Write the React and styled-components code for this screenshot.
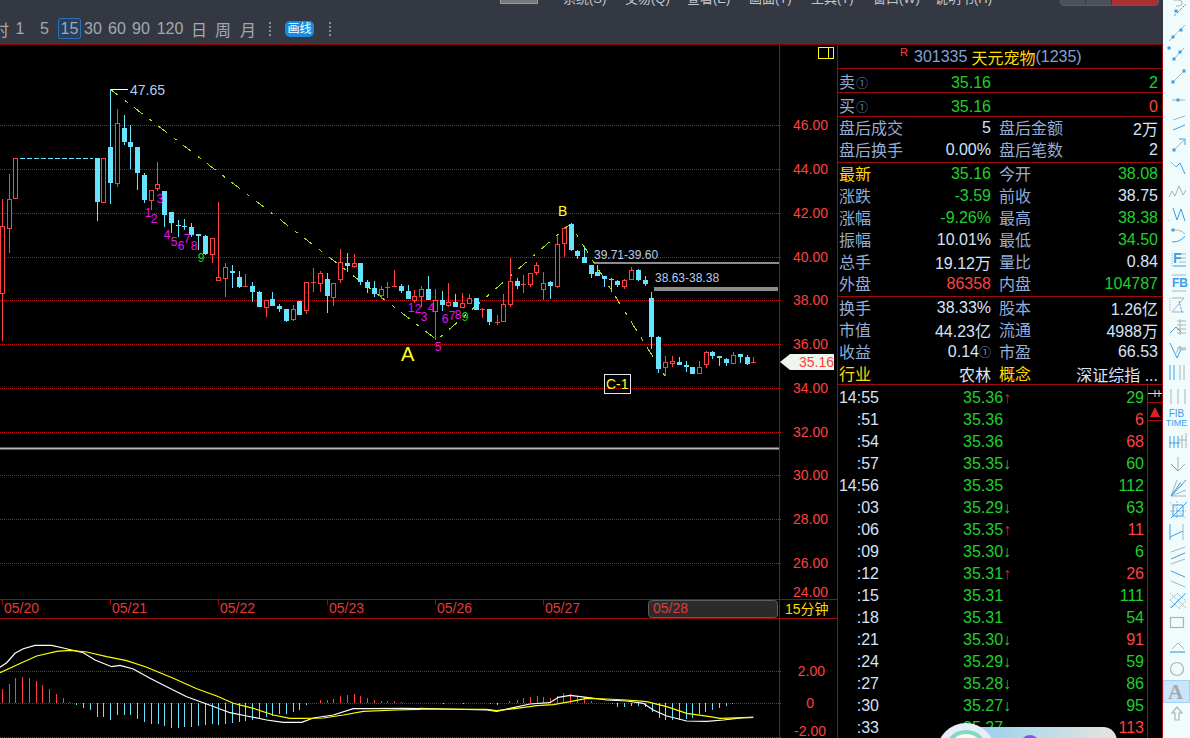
import React from 'react';
import styled, { createGlobalStyle } from 'styled-components';

const FONT = '"Liberation Sans", "Noto Sans CJK SC", sans-serif';
const RED = '#ff4040';
const CYAN = '#66e3ff';
const GREEN = '#1fd02b';
const LABEL = '#93acd8';
const VALUE = '#d5e3fb';
const YELLOW = '#ffdc00';
const LINE = '#9c0a0a';

const GlobalStyle = createGlobalStyle`
  html, body {
    margin: 0;
    width: 1190px;
    height: 738px;
    overflow: hidden;
    background: #000;
    font-family: ${FONT};
  }
`;

// x, high, body top, body bottom, low, kind
const candles = [
  [2, 199, 226, 293, 341, 'r'], [9, 174, 199, 228, 253, 'r'], [15, 158, 158, 198, 198, 'r'],
  [97, 158, 158, 202, 221, 'c'], [103, 158, 158, 202, 202, 'r'], [110, 89, 147, 183, 204, 'c'],
  [117, 109, 123, 183, 187, 'r'], [124, 115, 128, 142, 145, 'c'], [130, 125, 142, 147, 169, 'c'],
  [137, 147, 147, 173, 190, 'c'], [144, 173, 175, 200, 203, 'c'], [151, 190, 190, 200, 210, 'r'],
  [157, 162, 184, 188, 191, 'r'], [164, 191, 191, 215, 227, 'c'], [171, 212, 212, 223, 233, 'c'],
  [178, 220, 225, 226, 237, 'c'], [184, 219, 226, 227, 230, 'c'], [191, 223, 227, 235, 237, 'c'],
  [198, 234, 234, 236, 250, 'c'], [205, 235, 236, 254, 255, 'c'], [212, 238, 238, 254, 263, 'r'],
  [218, 202, 277, 280, 280, 'r'], [225, 263, 267, 278, 297, 'r'], [232, 265, 271, 273, 288, 'c'],
  [239, 271, 277, 287, 288, 'c'], [245, 274, 286, 287, 287, 'r'], [252, 282, 286, 292, 302, 'c'],
  [259, 291, 292, 307, 307, 'c'], [266, 300, 300, 307, 317, 'r'], [272, 292, 299, 306, 306, 'c'],
  [279, 304, 306, 309, 312, 'c'], [286, 309, 309, 321, 322, 'c'], [293, 305, 309, 319, 321, 'r'],
  [299, 301, 301, 315, 315, 'c'], [306, 282, 282, 310, 314, 'r'], [313, 268, 282, 283, 292, 'r'],
  [320, 271, 273, 283, 292, 'r'], [327, 273, 279, 296, 313, 'c'], [333, 283, 283, 297, 306, 'r'],
  [340, 249, 262, 279, 283, 'r'], [347, 253, 263, 266, 272, 'c'], [354, 254, 263, 266, 268, 'r'],
  [360, 263, 263, 282, 285, 'c'], [367, 280, 282, 288, 293, 'c'], [374, 281, 288, 294, 297, 'c'],
  [381, 286, 289, 295, 299, 'r'], [387, 282, 287, 288, 298, 'r'], [394, 270, 286, 287, 287, 'r'],
  [401, 284, 286, 291, 293, 'c'], [408, 285, 291, 299, 299, 'c'], [414, 290, 296, 300, 303, 'r'],
  [421, 286, 289, 296, 307, 'r'], [428, 276, 289, 300, 300, 'c'], [435, 289, 300, 311, 340, 'r'],
  [442, 291, 300, 305, 311, 'c'], [448, 283, 302, 305, 307, 'r'], [455, 294, 302, 307, 307, 'c'],
  [462, 293, 303, 307, 308, 'r'], [469, 294, 298, 303, 303, 'r'], [476, 298, 298, 310, 310, 'c'],
  [482, 308, 309, 310, 318, 'r'], [489, 309, 309, 322, 325, 'c'], [497, 315, 322, 323, 325, 'r'],
  [503, 294, 304, 321, 321, 'r'], [510, 258, 281, 304, 307, 'r'], [517, 278, 281, 286, 289, 'c'],
  [523, 275, 284, 285, 293, 'r'], [530, 273, 273, 284, 287, 'r'], [536, 262, 265, 272, 275, 'r'],
  [543, 272, 283, 289, 300, 'r'], [550, 281, 282, 286, 299, 'c'], [557, 235, 244, 286, 288, 'r'],
  [564, 227, 228, 243, 257, 'r'], [571, 223, 224, 250, 251, 'c'], [577, 250, 251, 256, 259, 'c'],
  [584, 247, 257, 263, 263, 'c'], [591, 265, 265, 274, 278, 'c'], [597, 265, 272, 276, 276, 'c'],
  [604, 276, 276, 279, 287, 'c'], [611, 278, 279, 280, 292, 'c'], [617, 280, 281, 285, 287, 'c'],
  [624, 279, 280, 286, 289, 'r'], [631, 267, 270, 279, 279, 'r'], [638, 269, 270, 280, 281, 'c'],
  [645, 276, 280, 284, 286, 'c'], [651, 292, 298, 337, 349, 'c'], [658, 336, 337, 369, 373, 'c'],
  [665, 356, 362, 367, 376, 'r'], [672, 356, 361, 363, 367, 'r'], [679, 357, 362, 365, 365, 'c'],
  [686, 361, 365, 367, 372, 'c'], [692, 367, 367, 374, 374, 'c'], [699, 361, 367, 373, 373, 'r'],
  [706, 351, 352, 364, 368, 'r'], [712, 351, 352, 356, 359, 'c'], [719, 356, 356, 358, 366, 'c'],
  [726, 358, 359, 363, 366, 'c'], [733, 352, 355, 363, 363, 'r'], [740, 354, 354, 357, 363, 'c'],
  [747, 355, 357, 364, 365, 'c'], [753, 357, 362, 363, 363, 'r'],
];

const priceGrid = [
  [46, 125], [44, 169], [42, 213], [40, 257], [38, 300], [36, 344],
  [34, 388], [32, 432], [30, 475], [28, 519], [26, 563],
];

const dates = [
  ['05/20', 2], ['05/21', 110], ['05/22', 218], ['05/23', 327],
  ['05/26', 435], ['05/27', 543], ['05/28', 651],
];

const tdMarks = [
  ['1', 148, 213], ['2', 154, 219], ['3', 160, 199], ['4', 167, 235], ['5', 174, 242],
  ['6', 181, 246], ['7', 187, 239], ['8', 194, 246], ['9', 201, 258, true],
  ['1', 411, 308], ['2', 418, 309], ['3', 424, 317], ['4', 431, 308], ['5', 438, 347],
  ['6', 445, 319], ['7', 452, 316], ['8', 458, 315], ['9', 465, 317, true],
];

// macd bars: zoom x, zoom y (3x crops)
const leftBars = [
  [7, 297], [28, 282], [46, 264], [67, 261], [88, 264], [109, 273], [127, 285], [148, 297], [169, 312], [190, 324], [208, 336],
  [229, 345], [250, 354], [271, 360], [292, 381], [310, 381], [331, 390], [352, 375], [373, 375], [391, 375], [412, 387],
  [433, 396], [454, 402], [475, 402], [493, 408], [514, 414], [535, 414], [553, 411], [574, 411], [595, 408], [616, 405],
  [637, 402], [655, 405], [676, 402], [697, 399], [718, 396], [736, 393], [757, 390], [778, 384], [799, 381], [817, 378],
  [838, 372], [859, 372], [880, 366], [898, 360], [919, 345], [961, 330], [982, 330], [1000, 327], [1021, 318], [1042, 315],
  [1063, 312], [1081, 318], [1102, 324], [1123, 330], [1144, 333], [1162, 333], [1183, 333], [1204, 336],
];
const rightBars = [
  [70, 343], [130, 343], [210, 343], [230, 345], [268, 334], [290, 330], [310, 325], [330, 322], [350, 318], [370, 322],
  [390, 325], [412, 318], [430, 310], [451, 312], [472, 318], [493, 322], [513, 332], [575, 343], [592, 351], [613, 351],
  [634, 348], [655, 348], [676, 351], [697, 366], [716, 384], [736, 390], [757, 390], [778, 390], [799, 387], [817, 384],
  [838, 372], [856, 366], [877, 360], [898, 354], [919, 348], [937, 342],
];
const difLeft = [[0,232],[20,218],[45,190],[70,176],[105,166],[155,166],[190,174],[215,180],[250,188],[285,210],[335,230],[360,226],[400,237],[450,265],[500,290],[560,320],[620,342],[690,368],[740,378],[800,390],[850,397],[905,397],[940,384],[1000,375],[1060,356],[1110,356],[1215,355],[1260,356]];
const difRight = [[0,355],[200,360],[230,364],[270,355],[330,342],[390,338],[415,322],[450,316],[500,322],[560,330],[620,333],[670,340],[700,360],[740,378],[800,393],[860,394],[910,390],[970,383],[1000,382]];
const deaLeft = [[0,248],[50,225],[110,198],[170,184],[210,181],[260,186],[320,200],[380,212],[440,232],[520,265],[590,296],[650,318],[700,340],[760,355],[820,375],[870,385],[910,385],[970,384],[1030,375],[1090,364],[1190,360],[1260,358]];
const deaRight = [[0,357],[200,358],[230,362],[290,355],[350,347],[400,344],[450,335],[500,325],[560,327],[620,330],[680,335],[740,350],[800,370],[870,380],[900,385],[1000,382]];

const toPage = (list, left) => list.map(([x, y]) => [left + x / 3, 590 + y / 3]);
const toPoints = (list) => list.map(([x, y]) => `${x.toFixed(1)},${y.toFixed(1)}`).join(' ');
const macdBars = [...toPage(leftBars, 0), ...toPage(rightBars, 420)];
const difLine = toPoints([...toPage(difLeft, 0), ...toPage(difRight, 420)]);
const deaLine = toPoints([...toPage(deaLeft, 0), ...toPage(deaRight, 420)]);

const Page = styled.div`
  position: relative;
  width: 1190px;
  height: 738px;
  overflow: hidden;
  display: flex;
  background: #000;
`;
const Main = styled.div`
  width: 1163px;
  display: flex;
  flex-direction: column;
`;
const TopBar = styled.div`
  height: 44px;
  flex: none;
  background: #343843;
  border-bottom: 1px solid #8b0000;
  overflow: hidden;
`;
const MenuRow = styled.div`
  height: 6px;
  padding-left: 500px;
  display: flex;
  align-items: flex-start;
  overflow: hidden;
`;
const Grip = styled.div`
  width: 38px;
  height: 4px;
  margin-right: 25px;
  background: #77787a;
  border: 1px solid #9a9a9a;
  border-top: none;
  box-sizing: border-box;
`;
const MenuItem = styled.div`
  width: 62px;
  margin-top: -9px;
  font-size: 13px;
  line-height: 16px;
  color: #c4c7cc;
  white-space: nowrap;
`;
const WinButtons = styled.div`
  margin-left: 63px;
  display: flex;
  gap: 1px;
  border: 1px solid #555a64;
  border-top: none;
  border-radius: 0 0 4px 4px;
`;
const WinButton = styled.div`
  width: ${(p) => p.$w}px;
  height: 5px;
  background: ${(p) => (p.$close ? '#a83232' : '#4c505a')};
`;
const PeriodRow = styled.div`
  height: 21px;
  margin-top: 12px;
  margin-left: -7px;
  display: flex;
  align-items: center;
`;
const Period = styled.div`
  width: ${(p) => p.$w}px;
  height: 21px;
  box-sizing: border-box;
  display: flex;
  align-items: center;
  justify-content: center;
  font-size: 16px;
  color: #a4a8b0;
  border: ${(p) => (p.$active ? '1px solid #2f6fb5' : 'none')};
  border-radius: 2px;
  background: ${(p) => (p.$active ? '#2a3f5c' : 'transparent')};
`;
const Dots = styled.div`
  width: 2px;
  height: 14px;
  margin: 0 ${(p) => p.$r}px 0 ${(p) => p.$l}px;
  background: repeating-linear-gradient(#8a8d94 0 2px, transparent 2px 4px);
`;
const DrawButton = styled.div`
  width: 29px;
  height: 16px;
  border-radius: 5px;
  background: #168bdc;
  color: #fff;
  font-size: 12px;
  line-height: 16px;
  text-align: center;
`;
const Content = styled.div`
  flex: 1;
  display: flex;
  min-height: 0;
`;
const ChartSvg = styled.svg`
  width: 837px;
  height: 693px;
  flex: none;
  display: block;
  font-family: ${FONT};
`;
const AxisText = styled.text`
  font-size: 14px;
  fill: ${RED};
`;
const DateText = styled.text`
  font-size: 14px;
  fill: #e03a3a;
`;
const InfoText = styled.text`
  font-size: ${(p) => p.$size || 12}px;
  fill: #b8cbec;
`;
const WaveText = styled.text`
  font-size: ${(p) => p.$size}px;
  fill: ${(p) => p.$fill || '#ffff20'};
`;
const TdText = styled.text`
  font-size: 12px;
  fill: ${(p) => (p.$green ? '#18d018' : '#e414f0')};
`;

const Panel = styled.div`
  width: 326px;
  flex: none;
  box-sizing: border-box;
  display: flex;
  flex-direction: column;
  border-left: 1px solid ${LINE};
  border-right: 1px solid ${LINE};
  font-size: 16px;
`;
const Title = styled.div`
  height: 24px;
  flex: none;
  box-sizing: border-box;
  padding-left: 62px;
  display: flex;
  align-items: center;
  border-bottom: 1px solid ${LINE};
  color: #7ea2dc;
`;
const Mark = styled.span`
  width: 14px;
  margin-top: -10px;
  font-size: 11px;
  color: ${RED};
`;
const StockName = styled.span`
  color: ${YELLOW};
  margin-left: 4px;
`;
const OrderRow = styled.div`
  height: 24px;
  flex: none;
  box-sizing: border-box;
  padding-left: 1px;
  display: grid;
  grid-template-columns: 94px 58px 167px;
  align-items: center;
  border-bottom: 1px solid ${LINE};
  color: ${LABEL};
`;
const OrderLabel = styled.span`
  padding-bottom: 3px;
  white-space: nowrap;
`;
const Level = styled.span`
  font-size: 12px;
  color: #5f85b5;
  margin-left: 1px;
`;
const Section = styled.div`
  height: ${(p) => p.$h}px;
  flex: none;
  box-sizing: border-box;
  padding-left: 1px;
  border-bottom: 1px solid ${LINE};
`;
const QuoteRow = styled.div`
  height: 22px;
  display: grid;
  grid-template-columns: 152px 159px;
  gap: 8px;
`;
const Quote = styled.div`
  display: flex;
  justify-content: space-between;
  align-items: center;
  margin-top: -2px;
  white-space: nowrap;
`;
const Label = styled.span`
  padding-bottom: 2px;
  color: ${(p) => (p.$hot ? YELLOW : LABEL)};
`;
const Value = styled.span`
  color: ${(p) => p.$c || VALUE};
  text-align: right;
`;
const Small = styled.span`
  font-size: 12px;
  color: #7b8ba5;
`;
const TradeWrap = styled.div`
  flex: 1;
  display: flex;
  min-height: 0;
  overflow: hidden;
`;
const TradeList = styled.div`
  width: 309px;
  flex: none;
  padding-top: 2px;
  border-right: 1px solid ${LINE};
`;
const TradeRow = styled.div`
  height: 22px;
  display: grid;
  grid-template-columns: 41px 84px 60px 124px;
  align-items: center;
`;
const TradeTime = styled.span`
  color: ${VALUE};
  text-align: right;
`;
const TradePrice = styled.span`
  grid-column: 3;
  color: ${GREEN};
  white-space: nowrap;
`;
const Tick = styled.span`
  color: ${(p) => (p.$up ? '#e02020' : GREEN)};
`;
const TradeVol = styled.span`
  grid-column: 4;
  color: ${(p) => (p.$up ? RED : GREEN)};
  text-align: right;
  padding-right: 3px;
`;
const SideCol = styled.div`
  flex: 1;
  display: flex;
  flex-direction: column;
`;
const SideBtn = styled.div`
  height: 17px;
  display: flex;
  align-items: center;
  justify-content: center;
  border-bottom: 1px solid ${LINE};
`;

const ToolStrip = styled.div`
  flex: 1;
  height: 738px;
  background: #f0fcfb;
  display: flex;
  flex-direction: column;
  overflow: hidden;
`;
const ToolCell = styled.div`
  height: 22.75px;
  flex: none;
  display: flex;
  align-items: center;
  justify-content: center;
  box-sizing: border-box;
  &:first-child { margin-top: -2.4px; }
  ${(p) => p.$active && 'background: #c9e5fb; border: 1px solid #9fd2fa;'}
`;
const ToolSvg = styled.svg`
  width: 27px;
  height: 22px;
  display: block;
  flex: none;
  font-family: ${FONT};
`;
const G = styled.g`
  stroke: #adb2b6;
  fill: none;
`;
const B = styled.g`
  stroke: #3c9ee8;
  fill: none;
`;
const Sq = styled.rect.attrs((p) => ({ x: p.$x - 1.5, y: p.$y - 1.5, width: 3, height: 3 }))`
  fill: #3c9ee8;
  stroke: none;
`;
const IconLetter = styled.text`
  font-size: ${(p) => p.$size}px;
  font-weight: ${(p) => (p.$thin ? 400 : 700)};
  fill: #3c9ee8;
  stroke: none;
`;
const SerifA = styled.text`
  font-family: "Liberation Serif", serif;
  font-size: 21px;
  font-weight: 700;
  fill: #a5a8aa;
`;

const Dock = styled.div`
  position: absolute;
  left: 937px;
  top: 723px;
  width: 180px;
  height: 30px;
`;
const DockPill = styled.div`
  position: absolute;
  left: 20px;
  top: 4px;
  width: 160px;
  height: 30px;
  border-radius: 14px 14px 0 0;
  background: linear-gradient(90deg, #8ecbea, #b9dcea 50%, #e4e4de);
`;
const DockBall = styled.div`
  position: absolute;
  left: 0;
  top: 0;
  width: 58px;
  height: 58px;
  box-sizing: border-box;
  border-radius: 50%;
  background: #e9ecfb;
  padding: 7px;
`;
const DockCore = styled.div`
  width: 44px;
  height: 44px;
  box-sizing: border-box;
  border-radius: 50%;
  border: 4px solid #7ddcbb;
  background: #f4fbf8;
`;
const DockRing = styled.div`
  position: absolute;
  left: 83px;
  top: 12px;
  width: 20px;
  height: 20px;
  box-sizing: border-box;
  border-radius: 50%;
  border: 3px solid #7a55f0;
`;

const poly = (pts) => pts.map((p) => p.join(',')).join(' ');

const toolIcons = [
  <><G><path d="M10 2h6a3 3 0 0 1 0 6h-3" /></G><B><path d="M11 18 23 6" strokeDasharray="3 1" /></B><Sq $x={13} $y={13} /></>,
  <><G><path d="M6 20 22 4" strokeDasharray="5 1" /></G><Sq $x={10} $y={16} /><Sq $x={18} $y={9} /></>,
  <><G><path d="M11 16 21 5" /></G><Sq $x={11} $y={16} /><Sq $x={17} $y={9} /><Sq $x={6} $y={5} /></>,
  <><G><path d="M10 16 21 5" /></G><Sq $x={10} $y={16} /><Sq $x={21} $y={5} /></>,
  <><G><path d="M9 11h13" /></G><Sq $x={15} $y={11} /></>,
  <><G><path d="M10 8l12-4" /></G><B><path d="M10 18l12-5" /></B></>,
  <><G><path d="M11 16 21 6" /></G><B><path d="M16 5h6v6" /></B><Sq $x={11} $y={16} /></>,
  <><G><path d="M8 5l5 5" /></G><B><path d="M13 10l4-4 5 11" /></B></>,
  <><G><path d="M6 17l3-6 3 5 4-10 4 9 3-5" /></G></>,
  <><G><path d="M6 17v1" /></G><B><path d="M10 5l4 12 4-11 4 12" /></B></>,
  <><Sq $x={10} $y={5} /><G><path d="M11 5c5 0 8 1 11 4" /></G><B><path d="M9 17c6 0 10-2 13-6" /></B></>,
  <><G><path d="M9 5v14" strokeDasharray="1 1" /><path d="M16 6h7M16 10h7M16 14h7" /></G><IconLetter $size={14} x="10" y="15">F</IconLetter><B><path d="M10 18h13" /></B></>,
  <><G><path d="M9 4h14M9 20h14" /></G><IconLetter $size={12} x="9" y="16">FB</IconLetter></>,
  <><G><path d="M7 4v14" strokeDasharray="1 1" /><path d="M9 4h12M9 18h12M21 4 9 18" /></G><B><path d="M16 7l3 11" strokeDasharray="2 1" /></B></>,
  <><G><path d="M14 5h9M14 9h9M14 13h9M14 17h9M17 3v16" /></G><B><path d="M7 17l6-6 5 5" /></B></>,
  <><G><path d="M13 14l4-7 2 4 4-1M14 9h9" /></G><B><path d="M7 4l7 15 4-9" /></B></>,
  <><B><path d="M7 3v15M11 3v15" /></B><G><path d="M17 3v15M21 3v15" /></G></>,
  <><G><path d="M8 4v15M15 4v15M22 4v15" /></G></>,
  <><IconLetter $size={10} $thin x="13.5" y="10" textAnchor="middle">FIB</IconLetter><IconLetter $size={9} $thin x="13.5" y="19" textAnchor="middle">TIME</IconLetter></>,
  <><B><path d="M7 6v12M11 6v12M15 6v12M6 13h11" /></B><G><path d="M19 5v13M23 3v15M15 10h9" /></G></>,
  <><G><path d="M15 4v14M15 18l7-7" /></G><B><path d="M8 11l7 7" /></B></>,
  <><G><path d="M8 20 14 4M8 20 20 8M8 20h15M8 20l15-6" /></G><B><path d="M8 20 23 4M8 20 18 6" /></B></>,
  <><G><path d="M7 4 22 20M14 3v17M7 13h16" strokeDasharray="2 1" /></G><B><path d="M10 7h10v11H10zM8 20 24 4" /></B></>,
  <><B><path d="M7 3v16M7 16l13-6" /></B><G><path d="M20 3v16M8 8v0" /></G></>,
  <><G><path d="M8 8l14-5M8 20l14-5" /></G><B><path d="M8 15l14-6" /></B></>,
  <><B><path d="M8 4l14 6" /></B><G><path d="M8 14l14 6" /></G></>,
  <><G><path d="M7 4l16 15M7 11l10 9M14 4l9 8M23 4 7 19M15 4 7 11M23 12l-7 7" strokeDasharray="2 1" /></G><B><path d="M22 5 8 19" /></B></>,
  <><G strokeWidth="1.2"><rect x="7.5" y="5.5" width="13" height="10" /></G></>,
  <><G><path d="M9 14l6-6 6 6" /></G><B strokeWidth="1.2"><path d="M7 17h15" /></B></>,
  <><G strokeWidth="1.2"><circle cx="14" cy="11" r="6.5" /></G></>,
  <SerifA x="5" y="19">A</SerifA>,
  <><G strokeWidth="1.2"><path d="M14 4l5 6h-3v7h-4v-7H9z" /></G></>,
];

const quoteSections = [
  {
    h: 46,
    rows: [
      [['盘后成交'], ['5'], ['盘后金额'], ['2万']],
      [['盘后换手'], ['0.00%'], ['盘后笔数'], ['2']],
    ],
  },
  {
    h: 134,
    rows: [
      [['最新', true], ['35.16', GREEN], ['今开'], ['38.08', GREEN]],
      [['涨跌'], ['-3.59', GREEN], ['前收'], ['38.75']],
      [['涨幅'], ['-9.26%', GREEN], ['最高'], ['38.38', GREEN]],
      [['振幅'], ['10.01%'], ['最低'], ['34.50', GREEN]],
      [['总手'], ['19.12万'], ['量比'], ['0.84']],
      [['外盘'], ['86358', RED], ['内盘'], ['104787', GREEN]],
    ],
  },
  {
    h: 88,
    rows: [
      [['换手'], ['38.33%'], ['股本'], ['1.26亿']],
      [['市值'], ['44.23亿'], ['流通'], ['4988万']],
      [['收益'], ['0.14', null, '①'], ['市盈'], ['66.53']],
      [['行业', true], ['农林'], ['概念', true], ['深证综指 ...']],
    ],
  },
];

// time, price, tick (u/d), volume, red volume
const trades = [
  ['14:55', '35.36', 'u', '29'], [':51', '35.36', '', '6', true], [':54', '35.36', '', '68', true],
  [':57', '35.35', 'd', '60'], ['14:56', '35.35', '', '112'], [':03', '35.29', 'd', '63'],
  [':06', '35.35', 'u', '11', true], [':09', '35.30', 'd', '6'], [':12', '35.31', 'u', '26', true],
  [':15', '35.31', '', '111'], [':18', '35.31', '', '54'], [':21', '35.30', 'd', '91', true],
  [':24', '35.29', 'd', '59'], [':27', '35.28', 'd', '86'], [':30', '35.27', 'd', '95'],
  [':33', '35.27', '', '113', true],
];

const Chart = () => (
  <ChartSvg viewBox="0 45 837 693">
    <g stroke="#c81010" strokeDasharray="1 1" shapeRendering="crispEdges">
      {priceGrid.map(([, y]) => <line key={y} x1="0" x2="781" y1={y + 0.5} y2={y + 0.5} />)}
      <line x1="0" x2="781" y1="671.5" y2="671.5" />
      <line x1="0" x2="781" y1="703.5" y2="703.5" />
      <line x1="0" x2="781" y1="737.5" y2="737.5" />
    </g>
    <rect x="0" y="447.5" width="779" height="2" fill="#b8b8b8" />
    <rect x="594" y="262" width="185" height="2" fill="#8c8c8c" />
    <rect x="654" y="287" width="124" height="4" fill="#8c8c8c" />
    <polyline
      points="110,89 437,340 570,224 665,376"
      fill="none"
      stroke="#a0e81c"
      strokeDasharray="10.5 8.5 3.4 8.2"
      shapeRendering="crispEdges"
    />
    <line x1="20" x2="93" y1="158.5" y2="158.5" stroke={CYAN} strokeDasharray="5 2" shapeRendering="crispEdges" />
    <line x1="110" x2="128" y1="89.5" y2="89.5" stroke="#fff" shapeRendering="crispEdges" />

    <g shapeRendering="crispEdges">
      {candles.map(([x, high, top, bot, low, kind]) => {
        const color = kind === 'r' ? RED : CYAN;
        const thin = bot - top <= 1;
        return (
          <g key={x}>
            <line x1={x + 0.5} x2={x + 0.5} y1={high} y2={low} stroke={color} />
            {thin && <line x1={x - 2} x2={x + 3} y1={top + 0.5} y2={top + 0.5} stroke={color} />}
            {!thin && kind === 'r' && (
              <rect x={x - 1.5} y={top + 0.5} width="4" height={bot - top} fill="#000" stroke={color} />
            )}
            {!thin && kind === 'c' && <rect x={x - 2} y={top} width="5" height={bot - top} fill={color} />}
          </g>
        );
      })}
    </g>

    {tdMarks.map(([t, x, y, green]) => (
      <TdText key={`${x}-${t}`} x={x} y={y + 4} textAnchor="middle" $green={green}>{t}</TdText>
    ))}
    <InfoText $size={14} x="130" y="95">47.65</InfoText>
    <InfoText x="594" y="259">39.71-39.60</InfoText>
    <InfoText x="655" y="282">38.63-38.38</InfoText>
    <WaveText $size={14} x="558" y="216">B</WaveText>
    <WaveText $size={20} x="401" y="361">A</WaveText>
    <rect x="604.5" y="374.5" width="26" height="19" fill="none" stroke="#e6e6f0" />
    <WaveText $size={14} x="606" y="389">C-1</WaveText>

    <line x1="0" x2="837" y1="599.5" y2="599.5" stroke={LINE} shapeRendering="crispEdges" />
    <line x1="0" x2="837" y1="618.5" y2="618.5" stroke={LINE} shapeRendering="crispEdges" />
    <rect x="648.5" y="600.5" width="129" height="17" rx="3" fill="#2b2b2b" stroke="#5c5c5c" />
    {dates.map(([d, x]) => (
      <g key={d}>
        <line x1={x + 0.5} x2={x + 0.5} y1="600" y2="605" stroke={LINE} />
        <DateText x={x + 2} y="613">{d}</DateText>
      </g>
    ))}
    <WaveText $size={14} $fill={YELLOW} x="785" y="614">15分钟</WaveText>

    <g shapeRendering="crispEdges">
      {macdBars.map(([x, y], i) => (
        <line
          key={i}
          x1={Math.round(x) + 0.5}
          x2={Math.round(x) + 0.5}
          y1={y}
          y2="703"
          stroke={y < 703 ? RED : CYAN}
        />
      ))}
    </g>
    <polyline points={difLine} fill="none" stroke="#fff" strokeWidth="1.2" />
    <polyline points={deaLine} fill="none" stroke="#ffff00" strokeWidth="1.2" />

    <line x1="779.5" x2="779.5" y1="45" y2="738" stroke={LINE} shapeRendering="crispEdges" />
    {priceGrid.map(([p, y]) => (
      <AxisText key={p} x="828" y={y + 5} textAnchor="end">{p.toFixed(2)}</AxisText>
    ))}
    <AxisText x="828" y="597" textAnchor="end">24.00</AxisText>
    <AxisText x="825" y="676" textAnchor="end">2.00</AxisText>
    <AxisText x="814" y="708" textAnchor="end">0</AxisText>
    <AxisText x="826" y="736" textAnchor="end">-2.00</AxisText>

    <polygon points={poly([[780, 362], [790, 354], [834, 354], [834, 370], [790, 370]])} fill="#eef6ee" />
    <AxisText x="834" y="367" textAnchor="end">35.16</AxisText>
    <rect x="818.5" y="47.5" width="15" height="11" fill="none" stroke="#ffff00" />
    <line x1="828.5" x2="828.5" y1="47" y2="59" stroke="#ffff00" />
  </ChartSvg>
);

const QuotePanel = () => (
  <Panel>
    <Title>
      <Mark>R</Mark>
      301335<StockName>天元宠物</StockName>(1235)
    </Title>
    <OrderRow>
      <OrderLabel>卖<Level>①</Level></OrderLabel>
      <Value $c={GREEN}>35.16</Value>
      <Value $c={GREEN}>2</Value>
    </OrderRow>
    <OrderRow>
      <OrderLabel>买<Level>①</Level></OrderLabel>
      <Value $c={GREEN}>35.16</Value>
      <Value $c={RED}>0</Value>
    </OrderRow>
    {quoteSections.map((s) => (
      <Section key={s.h} $h={s.h}>
        {s.rows.map(([a, b, c, d]) => (
          <QuoteRow key={a[0]}>
            <Quote>
              <Label $hot={a[1]}>{a[0]}</Label>
              <Value $c={b[1]}>{b[0]}{b[2] && <Small>{b[2]}</Small>}</Value>
            </Quote>
            <Quote>
              <Label $hot={c[1]}>{c[0]}</Label>
              <Value $c={d[1]}>{d[0]}</Value>
            </Quote>
          </QuoteRow>
        ))}
      </Section>
    ))}
    <TradeWrap>
      <TradeList>
        {trades.map(([time, price, tick, vol, up], i) => (
          <TradeRow key={i}>
            <TradeTime>{time}</TradeTime>
            <TradePrice>
              {price}
              {tick && <Tick $up={tick === 'u'}>{tick === 'u' ? '↑' : '↓'}</Tick>}
            </TradePrice>
            <TradeVol $up={up}>{vol}</TradeVol>
          </TradeRow>
        ))}
      </TradeList>
      <SideCol>
        <SideBtn>
          <svg width="14" height="9" viewBox="0 0 14 9">
            <path d="M0 4.5h14M7 1v7M11 1v7" stroke="#ddd" fill="none" />
          </svg>
        </SideBtn>
        <SideBtn>
          <svg width="10" height="10" viewBox="0 0 10 10">
            <polygon points="5,0 10,10 0,10" fill="#e02020" />
          </svg>
        </SideBtn>
      </SideCol>
    </TradeWrap>
  </Panel>
);

const Tools = () => (
  <ToolStrip>
    {toolIcons.map((icon, i) => (
      <ToolCell key={i} $active={i === 30}>
        <ToolSvg viewBox="0 0 27 22">{icon}</ToolSvg>
      </ToolCell>
    ))}
  </ToolStrip>
);

export default function App() {
  return (
    <Page>
      <GlobalStyle />
      <Main>
        <TopBar>
          <MenuRow>
            <Grip />
            {['系统(S)', '交易(Q)', '查看(E)', '画面(T)', '工具(T)', '窗口(W)', '说明书(H)'].map((m) => (
              <MenuItem key={m}>{m}</MenuItem>
            ))}
            <WinButtons>
              <WinButton $w={24} />
              <WinButton $w={25} />
              <WinButton $w={46} $close />
            </WinButtons>
          </MenuRow>
          <PeriodRow>
            <Period $w={16}>时</Period>
            <Period $w={22}>1</Period>
            <Period $w={27}>5</Period>
            <Period $w={23} $active>15</Period>
            <Period $w={24}>30</Period>
            <Period $w={24}>60</Period>
            <Period $w={24}>90</Period>
            <Period $w={34}>120</Period>
            <Period $w={24}>日</Period>
            <Period $w={24}>周</Period>
            <Period $w={26}>月</Period>
            <Dots $l={8} $r={14} />
            <DrawButton>画线</DrawButton>
            <Dots $l={15} $r={0} />
          </PeriodRow>
        </TopBar>
        <Content>
          <Chart />
          <QuotePanel />
        </Content>
      </Main>
      <Tools />
      <Dock>
        <DockPill />
        <DockBall><DockCore /></DockBall>
        <DockRing />
      </Dock>
    </Page>
  );
}
